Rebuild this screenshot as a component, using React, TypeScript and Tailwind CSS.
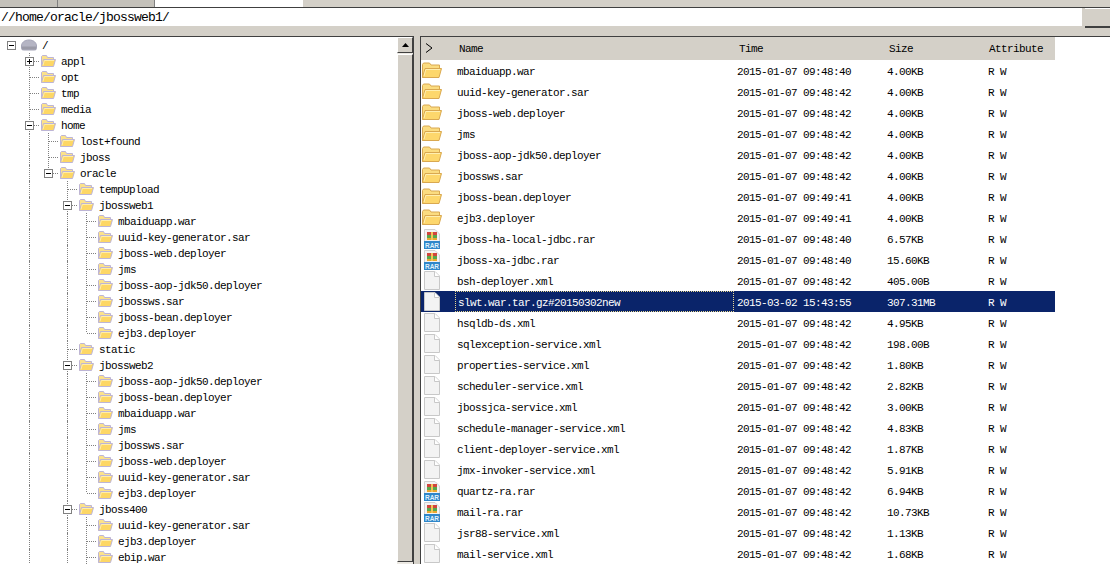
type TreeNode = { depth: number; name: string; toggle?: 'open' | 'closed'; last?: boolean };

const jbossWeb1 = ['mbaiduapp.war', 'uuid-key-generator.sar', 'jboss-web.deployer', 'jms', 'jboss-aop-jdk50.deployer', 'jbossws.sar', 'jboss-bean.deployer', 'ejb3.deployer'];
const jbossWeb2 = ['jboss-aop-jdk50.deployer', 'jboss-bean.deployer', 'mbaiduapp.war', 'jms', 'jbossws.sar', 'jboss-web.deployer', 'uuid-key-generator.sar', 'ejb3.deployer'];

const leaves = (names: string[], closeLast: boolean): TreeNode[] =>
  names.map((name, i) => ({ depth: 4, name, last: closeLast && i === names.length - 1 }));

const tree: TreeNode[] = [
  { depth: 1, name: 'appl', toggle: 'closed' },
  { depth: 1, name: 'opt' },
  { depth: 1, name: 'tmp' },
  { depth: 1, name: 'media' },
  { depth: 1, name: 'home', toggle: 'open' },
  { depth: 2, name: 'lost+found' },
  { depth: 2, name: 'jboss' },
  { depth: 2, name: 'oracle', toggle: 'open', last: true },
  { depth: 3, name: 'tempUpload' },
  { depth: 3, name: 'jbossweb1', toggle: 'open' },
  ...leaves(jbossWeb1, true),
  { depth: 3, name: 'static' },
  { depth: 3, name: 'jbossweb2', toggle: 'open' },
  ...leaves(jbossWeb2, true),
  { depth: 3, name: 'jboss400', toggle: 'open' },
  ...leaves(['uuid-key-generator.sar', 'ejb3.deployer', 'ebip.war'], false),
];

type Kind = 'folder' | 'rar' | 'file';
const files: [Kind, string, string, string][] = [
  ['folder', 'mbaiduapp.war', '2015-01-07 09:48:40', '4.00KB'],
  ['folder', 'uuid-key-generator.sar', '2015-01-07 09:48:42', '4.00KB'],
  ['folder', 'jboss-web.deployer', '2015-01-07 09:48:42', '4.00KB'],
  ['folder', 'jms', '2015-01-07 09:48:42', '4.00KB'],
  ['folder', 'jboss-aop-jdk50.deployer', '2015-01-07 09:48:42', '4.00KB'],
  ['folder', 'jbossws.sar', '2015-01-07 09:48:42', '4.00KB'],
  ['folder', 'jboss-bean.deployer', '2015-01-07 09:49:41', '4.00KB'],
  ['folder', 'ejb3.deployer', '2015-01-07 09:49:41', '4.00KB'],
  ['rar', 'jboss-ha-local-jdbc.rar', '2015-01-07 09:48:40', '6.57KB'],
  ['rar', 'jboss-xa-jdbc.rar', '2015-01-07 09:48:40', '15.60KB'],
  ['file', 'bsh-deployer.xml', '2015-01-07 09:48:42', '405.00B'],
  ['file', 'slwt.war.tar.gz#20150302new', '2015-03-02 15:43:55', '307.31MB'],
  ['file', 'hsqldb-ds.xml', '2015-01-07 09:48:42', '4.95KB'],
  ['file', 'sqlexception-service.xml', '2015-01-07 09:48:42', '198.00B'],
  ['file', 'properties-service.xml', '2015-01-07 09:48:42', '1.80KB'],
  ['file', 'scheduler-service.xml', '2015-01-07 09:48:42', '2.82KB'],
  ['file', 'jbossjca-service.xml', '2015-01-07 09:48:42', '3.00KB'],
  ['file', 'schedule-manager-service.xml', '2015-01-07 09:48:42', '4.83KB'],
  ['file', 'client-deployer-service.xml', '2015-01-07 09:48:42', '1.87KB'],
  ['file', 'jmx-invoker-service.xml', '2015-01-07 09:48:42', '5.91KB'],
  ['rar', 'quartz-ra.rar', '2015-01-07 09:48:42', '6.94KB'],
  ['rar', 'mail-ra.rar', '2015-01-07 09:48:42', '10.73KB'],
  ['file', 'jsr88-service.xml', '2015-01-07 09:48:42', '1.13KB'],
  ['file', 'mail-service.xml', '2015-01-07 09:48:42', '1.68KB'],
];

function TreeFolder() {
  return (
    <svg width="16" height="16" viewBox="0 0 16 16" className="shrink-0">
      <path d="M1.5 13.5V3.5L2.5 2.5H6.5L7.5 4.5H13.5V7" fill="#fce28a" stroke="#bdb5d6" />
      <path d="M1.5 13.5L3.5 6.5H15.5L13.5 13.5Z" fill="#fdd765" stroke="#bdb5d6" />
      <path d="M3 12.5L4.3 7.5H14" fill="none" stroke="#ffeeaa" />
    </svg>
  );
}

function Connector({ node }: { node: TreeNode }) {
  return (
    <svg width="16" height="16" viewBox="0 0 16 16" className="shrink-0">
      <path d={node.last ? 'M5.5 0V8' : 'M5.5 0V16'} stroke="#808080" strokeDasharray="1 1" />
      <path d="M6 8.5H16" stroke="#808080" strokeDasharray="1 1" />
      {node.toggle && (
        <>
          <rect x="1.5" y="4.5" width="8" height="8" fill="#fff" stroke="#808080" />
          <path d="M3 8.5H8" stroke="#000" />
          {node.toggle === 'closed' && <path d="M5.5 6V11" stroke="#000" />}
        </>
      )}
    </svg>
  );
}

function TreeRow({ node }: { node: TreeNode }) {
  const cols = Array.from({ length: node.depth - 1 }, (_, i) => i + 1);
  return (
    <div className="flex h-4 items-center pl-[24px]">
      {cols.map((col) => (
        <div key={col} className="h-4 w-[19px] shrink-0 pl-[5px]">
          {col !== 2 && <div className="h-full border-l border-dotted border-[#808080]" />}
        </div>
      ))}
      <Connector node={node} />
      <TreeFolder />
      <span className="ml-[5px] whitespace-pre pt-[3px]">{node.name}</span>
    </div>
  );
}

function ListFolder() {
  return (
    <svg width="20" height="17" viewBox="0 0 20 17">
      <path d="M0.5 15.5V2.5L1.5 1H7.5L9 3H17.5V7" fill="#fbdc80" stroke="#d9a850" />
      <path d="M0.5 15.5L3 6.5H19.5L17 15.5Z" fill="#fdd76c" stroke="#d9a850" />
      <path d="M2 14L3.8 7.5H18" fill="none" stroke="#ffefb0" />
    </svg>
  );
}

function FileIcon() {
  return (
    <svg width="16" height="19" viewBox="0 0 16 19">
      <path d="M0.5 0.5H11L15.5 5V18.5H0.5Z" fill="#f3f3f3" stroke="#c8c8c8" />
      <path d="M10.5 0.5V5.5H15.5" fill="#fff" stroke="#c8c8c8" />
    </svg>
  );
}

function RarIcon() {
  return (
    <svg width="16" height="20" viewBox="0 0 16 20">
      <path d="M0.5 0.5H11L15.5 5V19.5H0.5Z" fill="#f3f3f3" stroke="#d0d0d0" />
      <rect x="3" y="3" width="10" height="3" fill="#d2453c" />
      <rect x="3" y="6" width="10" height="3" fill="#57a84a" />
      <rect x="3" y="9" width="10" height="2" fill="#eaa62e" />
      <rect x="7" y="3" width="2" height="8" fill="#f2c65a" />
      <rect x="0" y="12" width="16" height="8" fill="#2f86c9" />
      <text x="8" y="18.5" textAnchor="middle" fontSize="6.5" fontWeight="700" letterSpacing="0" fill="#dff0fb" fontFamily="Liberation Sans, sans-serif">
        RAR
      </text>
    </svg>
  );
}

function RowIcon({ kind }: { kind: Kind }) {
  if (kind === 'folder') return <ListFolder />;
  if (kind === 'rar') return <RarIcon />;
  return <FileIcon />;
}

export default function App() {
  return (
    <div className="flex h-[564px] w-[1110px] flex-col overflow-hidden bg-[#d4d0c8] font-['Liberation_Mono',monospace] text-[11px] tracking-[-0.6px] text-black">
      {/* tab strip, cut off by the top of the shot */}
      <div className="flex h-[8px] shrink-0 border-b border-[#404040]">
        <div className="w-[58px] border-r border-[#808080] bg-[#c4c1ba]" />
        <div className="w-[97px] border-r border-[#808080] bg-[#c4c1ba]" />
        <div className="w-[148px] bg-white" />
      </div>

      {/* path bar */}
      <div className="flex h-[20px] shrink-0">
        <div className="flex w-[1084px] items-center border-r-2 border-b-2 border-[#d4d0c8] bg-white pl-[1px] pt-[2px] text-[13px] tracking-[-0.8px]">
          //home/oracle/jbossweb1/
        </div>
        <div className="ml-[1px] flex-1 border-t border-b-2 border-t-white border-b-[#404040]" />
      </div>

      <div className="h-[8px] shrink-0" />

      <div className="flex min-h-0 flex-1">
        {/* tree */}
        <div className="w-[397px] shrink-0 overflow-hidden border-t border-[#404040] bg-white">
          <div className="flex h-4 items-center pl-[7px]">
            <svg width="9" height="9" viewBox="0 0 9 9" className="shrink-0">
              <rect x="0.5" y="0.5" width="8" height="8" fill="#fff" stroke="#808080" />
              <path d="M2 4.5H7" stroke="#000" />
            </svg>
            <svg width="16" height="12" viewBox="0 0 16 12" className="ml-[5px] shrink-0">
              <path d="M0.5 7C0.5 4 3 1 8 1S15.5 4 15.5 7V9.5C15.5 10.5 14.5 11 13.5 11H2.5C1.5 11 0.5 10.5 0.5 9.5Z" fill="#b5b5c4" stroke="#a5a5b8" />
              <path d="M1 7.5H15V10.5H1Z" fill="#9b9ba8" />
            </svg>
            <span className="ml-[5px] pt-[3px]">/</span>
          </div>
          {tree.map((node, i) => (
            <TreeRow key={i} node={node} />
          ))}
        </div>

        {/* tree scrollbar */}
        <div className="flex w-[16px] shrink-0 flex-col border-t border-[#404040] bg-[#ece9e3]">
          <div className="flex h-[16px] shrink-0 items-center justify-center border border-t-white border-l-white border-r-[#404040] border-b-[#404040] bg-[#d4d0c8]">
            <svg width="7" height="4" viewBox="0 0 7 4">
              <path d="M3.5 0L7 4H0Z" fill="#000" />
            </svg>
          </div>
          <div className="mt-[1px] h-[508px] shrink-0 border border-t-white border-l-white border-r-[#404040] border-b-[#404040] bg-[#d4d0c8]" />
        </div>

        {/* splitter */}
        <div className="w-[7px] shrink-0 border-l border-[#404040]" />

        {/* file list */}
        <div className="min-w-0 flex-1 border-t border-l border-[#404040] bg-white">
          <div className="flex h-[23px] w-[634px] items-center bg-[#d4d0c8] pt-[2px]">
            <div className="mb-[4px] w-[34px] pl-[4px]">
              <svg width="8" height="10" viewBox="0 0 8 10" className="block">
                <path d="M1 0.5L7 5L1 9.5" fill="none" stroke="#000" />
              </svg>
            </div>
            <div className="w-[279px] pl-[4px]">Name</div>
            <div className="w-[150px] pl-[5px]">Time</div>
            <div className="w-[101px] pl-[5px]">Size</div>
            <div className="w-[70px] pl-[4px]">Attribute</div>
          </div>
          {files.map(([kind, name, time, size]) => {
            const selected = name.startsWith('slwt');
            return (
              <div key={name} className={`flex h-[21px] w-[634px] items-center ${selected ? 'bg-[#0a246a] text-white' : ''}`}>
                <div className="flex w-[34px] items-center pl-[1px]">
                  <div className="flex w-[20px] justify-center">
                    <RowIcon kind={kind} />
                  </div>
                </div>
                <div className={`flex h-full w-[279px] items-center pl-[2px] pt-[4px] ${selected ? 'border border-dotted border-[#e8d890] pl-[1px]' : ''}`}>
                  {name}
                </div>
                <div className="w-[150px] pl-[3px] pt-[4px]">{time}</div>
                <div className="w-[101px] pl-[3px] pt-[4px]">{size}</div>
                <div className="w-[70px] pl-[3px] pt-[4px]">R W</div>
              </div>
            );
          })}
        </div>
      </div>
    </div>
  );
}
